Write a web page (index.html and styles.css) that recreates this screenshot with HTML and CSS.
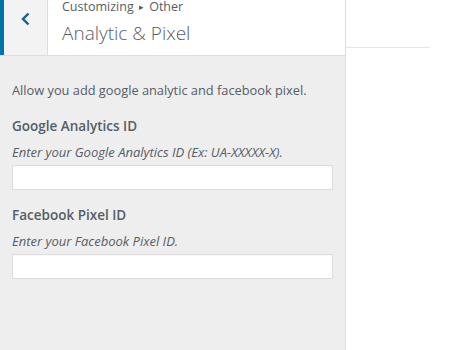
FILE: index.html
```html
<!DOCTYPE html>
<html>
<head>
<meta charset="utf-8">
<link rel="stylesheet" href="styles.css">
</head>
<body>
<div class="page">
  <aside class="sidebar">
    <header class="panel-head">
      <button class="back" aria-label="Back">
        <svg width="12" height="14" viewBox="0 0 12 14"><path d="M8.5 1.5 L3 7 L8.5 12.5" fill="none" stroke="#135e96" stroke-width="2.4"/></svg>
      </button>
      <div class="titles">
        <div class="crumb">Customizing <span class="sep">&#9656;</span> Other</div>
        <div class="title">Analytic &amp; Pixel</div>
      </div>
    </header>
    <div class="content">
      <p class="intro">Allow you add google analytic and facebook pixel.</p>
      <div class="field">
        <div class="label">Google Analytics ID</div>
        <div class="desc">Enter your Google Analytics ID (Ex: UA-XXXXX-X).</div>
        <input class="input" type="text">
      </div>
      <div class="field">
        <div class="label">Facebook Pixel ID</div>
        <div class="desc">Enter your Facebook Pixel ID.</div>
        <input class="input" type="text">
      </div>
    </div>
  </aside>
  <main class="preview">
    <div class="preview-bar"></div>
  </main>
</div>
</body>
</html>
```

FILE: styles.css
```css
html, body {
  margin: 0;
  padding: 0;
  background: #fff;
  font-family: "Open Sans", "Noto Sans", sans-serif;
  color: #555d66;
}
.page {
  display: flex;
  width: 450px;
  height: 350px;
  overflow: hidden;
}
.sidebar {
  width: 345px;
  flex: none;
  background: #eee;
  border-right: 1px solid #ddd;
  display: flex;
  flex-direction: column;
}
.panel-head {
  display: flex;
  height: 55px;
  background: #fff;
  border-bottom: 1px solid #ddd;
}
.back {
  width: 48px;
  flex: none;
  border: 0;
  border-left: 4px solid #0073aa;
  border-right: 1px solid #ddd;
  background: #f3f3f3;
  padding: 0 0 17px 0;
  margin: 0;
  display: flex;
  align-items: center;
  justify-content: center;
}
.titles {
  padding: 0 0 0 14px;
  display: flex;
  flex-direction: column;
}
.crumb {
  font-size: 12.5px;
  line-height: 14px;
  margin-top: 0;
  color: #555d66;
}
.sep {
  font-size: 9px;
  position: relative;
  top: -1px;
  margin: 0 2px;
}
.title {
  font-size: 19px;
  font-weight: 300;
  line-height: 24px;
  margin-top: 6px;
  color: #555d66;
}
.content {
  padding: 25px 12px 0 12px;
  display: flex;
  flex-direction: column;
}
.intro {
  margin: 0;
  font-size: 12.8px;
  line-height: 18px;
}
.field {
  display: flex;
  flex-direction: column;
  margin-top: 17px;
}
.field + .field {
  margin-top: 15px;
}
.label {
  font-size: 13.5px;
  font-weight: 600;
  line-height: 20px;
  color: #555d66;
}
.desc {
  font-size: 13px;
  font-style: italic;
  line-height: 18px;
  margin-top: 7px;
  margin-bottom: 4px;
}
.input {
  box-sizing: border-box;
  width: 321px;
  height: 25px;
  margin: 0;
  border: 1px solid #ddd;
  background: #fff;
  box-shadow: inset 0 1px 2px rgba(0,0,0,0.04);
}
.preview {
  flex: 1;
  background: #fff;
}
.preview-bar {
  width: 84px;
  height: 47px;
  border-bottom: 1px solid #e5e5e5;
}
```
